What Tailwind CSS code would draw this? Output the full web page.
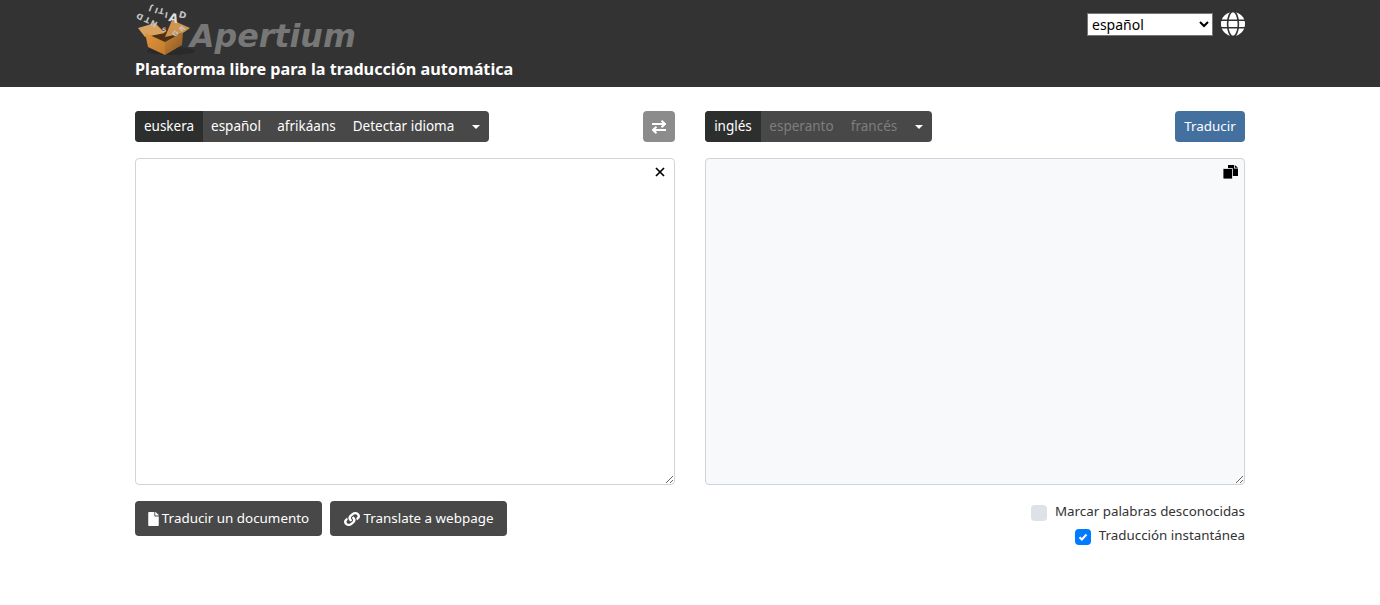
<!DOCTYPE html>
<html lang="es">
<head>
  <meta charset="UTF-8">
  <title>Apertium</title>
  <script src="https://cdn.jsdelivr.net/npm/@tailwindcss/browser@4"></script>
</head>
<body class="bg-white font-['Noto_Sans',sans-serif] h-[605px] overflow-hidden">
  <!-- header -->
  <header class="bg-[#333333] h-[87px]">
    <div class="w-[1110px] mx-auto flex justify-between">
      <div class="w-[400px]">
        <div class="flex items-start h-[58px]">
          <svg width="64" height="58" viewBox="0 0 64 58" class="shrink-0 -mr-[9px]">
            <defs>
              <linearGradient id="boxL" x1="0" y1="0" x2="1" y2="1"><stop offset="0" stop-color="#e0953f"/><stop offset="1" stop-color="#c27a2c"/></linearGradient>
              <linearGradient id="boxR" x1="0" y1="0" x2="1" y2="1"><stop offset="0" stop-color="#c98436"/><stop offset="1" stop-color="#8a5620"/></linearGradient>
            </defs>
            <ellipse cx="36" cy="51" rx="24" ry="4" fill="#2a2a2a"/>
            <path d="M10 33 L30 26 L48 32 L30 42 Z" fill="#4e3014"/>
            <path d="M3 28 L20 23 L30 33 L10 37 Z" fill="#d9a25e"/>
            <path d="M30 37 L37 20 L55 28 L48 33 Z" fill="#cf9450"/>
            <path d="M10 33 L30 42 L30 55 L13 47 Z" fill="url(#boxL)"/>
            <path d="M30 42 L48 32 L47 45 L30 55 Z" fill="url(#boxR)"/>
            <g fill="#c4c4c4" font-size="8" font-family="DejaVu Sans, sans-serif" font-weight="700">
              <text x="2" y="20" transform="rotate(205 5 17)">D</text>
              <text x="9" y="23" transform="rotate(205 12 20)">T</text>
              <text x="16" y="27" transform="rotate(205 19 24)">N</text>
              <text x="11" y="11" transform="rotate(200 14 8)">J</text>
              <text x="17" y="13" transform="rotate(200 20 10)">I</text>
              <text x="23" y="14" transform="rotate(195 26 11)">T</text>
              <text x="29" y="16" transform="rotate(190 31 14)">I</text>
              <text x="34" y="22" font-size="12" transform="rotate(15 38 18)" fill="#e0e0e0">A</text>
              <text x="44" y="18" font-size="9" transform="rotate(15 47 15)">D</text>
              <text x="27" y="32" font-size="6">S</text>
              <text x="37" y="36" font-size="7" transform="rotate(-40 40 33)">G</text>
              <text x="44" y="31" font-size="7" transform="rotate(-40 47 28)">R</text>
            </g>
          </svg>
          <span class="mt-[13px] font-['DejaVu_Sans',sans-serif] font-bold italic text-[31.7px] leading-[46px] text-[#777777]">Apertium</span>
        </div>
        <p class="font-bold text-[16.2px] leading-[22px] text-white">Plataforma libre para la traducción automática</p>
      </div>
      <div class="flex items-start gap-2 pt-3">
        <select class="mt-px w-[126px] h-[23px] bg-white text-black text-[14px] border border-[#767676]">
          <option>español</option>
        </select>
        <svg width="24" height="24" viewBox="0 0 24 24" fill="none" class="shrink-0">
          <circle cx="12" cy="12" r="12" fill="#fff"/>
          <g stroke="#333" stroke-width="1.6">
            <path d="M0 8.2h24M0 15.8h24"/>
            <ellipse cx="12" cy="12" rx="5.4" ry="12.5"/>
          </g>
        </svg>
      </div>
    </div>
  </header>

  <main class="w-[1110px] mx-auto pt-6 grid grid-cols-2 gap-x-[30px]">
    <!-- source column -->
    <div>
      <div class="flex justify-between h-[31px]">
        <div class="flex bg-[#484848] rounded text-white text-[13.5px] leading-[30px] text-center">
          <span class="w-[68px] bg-[#2d2f2f] rounded-l">euskera</span>
          <span class="w-[66px]">español</span>
          <span class="w-[75px]">afrikáans</span>
          <span class="w-[119px]">Detectar idioma</span>
          <span class="w-[26px] flex items-center justify-center"><span class="border-x-[4px] border-x-transparent border-t-[4px] border-t-white"></span></span>
        </div>
        <button class="w-8 h-[31px] bg-[#8c8c8c] rounded flex items-center justify-center">
          <svg width="14" height="14" viewBox="0 0 14 14" fill="none" stroke="#fff" stroke-width="2">
            <path d="M0 4h13M9.500 0.800 13 4 9.500 7.200M14 10H1M4.500 6.800 1 10l3.500 3.200"/>
          </svg>
        </button>
      </div>
      <div class="relative mt-4 h-[327px]">
        <textarea class="block w-full h-full bg-white border border-[#ced4da] rounded p-2"></textarea>
        <svg width="10" height="10" viewBox="0 0 10 10" class="absolute right-[10px] top-[9px]" stroke="#000" stroke-width="1.700" fill="none"><path d="M1 1l8 8M9 1l-8 8"/></svg>
      </div>
      <div class="flex gap-2 mt-4">
        <button class="h-[35px] w-[187px] bg-[#484848] rounded text-white text-[13.4px] flex items-center justify-center gap-[3px]">
          <svg width="11" height="14" viewBox="0 0 384 512" fill="#fff"><path d="M224 136V0H24C10.700 0 0 10.700 0 24v464c0 13.300 10.700 24 24 24h336c13.300 0 24-10.700 24-24V160H248c-13.200 0-24-10.800-24-24zm160-14.100v6.100H256V0h6.100c6.400 0 12.500 2.500 17 7l97.900 98c4.500 4.500 7 10.600 7 16.900z"/></svg>
          Traducir un documento
        </button>
        <button class="h-[35px] w-[177px] bg-[#484848] rounded text-white text-[13.4px] flex items-center justify-center gap-[4px]">
          <svg width="16" height="14" viewBox="0 0 512 512" fill="#fff" preserveAspectRatio="none"><path d="M326.612 185.391c59.747 59.809 58.927 155.698.36 214.59-.11.12-.24.25-.36.37l-67.2 67.2c-59.27 59.27-155.699 59.262-214.96 0-59.27-59.26-59.27-155.7 0-214.96l37.106-37.106c9.84-9.84 26.786-3.3 27.294 10.606.648 17.722 3.826 35.527 9.69 52.721 1.986 5.822.567 12.262-3.783 16.612l-13.087 13.087c-28.026 28.026-28.905 73.66-1.155 101.96 28.024 28.579 74.086 28.749 102.325.51l67.2-67.19c28.191-28.191 28.073-73.757 0-101.83-3.701-3.694-7.429-6.564-10.341-8.569a16.037 16.037 0 0 1-6.947-12.606c-.396-10.567 3.348-21.456 11.698-29.806l21.054-21.055c5.521-5.521 14.182-6.199 20.584-1.731a152.482 152.482 0 0 1 20.522 17.197zM467.547 44.449c-59.261-59.262-155.69-59.27-214.96 0l-67.2 67.2c-.12.12-.25.25-.36.37-58.566 58.892-59.387 154.781.36 214.59a152.454 152.454 0 0 0 20.521 17.196c6.402 4.468 15.064 3.789 20.584-1.731l21.054-21.055c8.35-8.35 12.094-19.239 11.698-29.806a16.037 16.037 0 0 0-6.947-12.606c-2.912-2.005-6.64-4.875-10.341-8.569-28.073-28.073-28.191-73.639 0-101.83l67.2-67.19c28.239-28.239 74.3-28.069 102.325.51 27.75 28.3 26.872 73.934-1.155 101.96l-13.087 13.087c-4.35 4.35-5.769 10.79-3.783 16.612 5.864 17.194 9.042 34.999 9.69 52.721.509 13.906 17.454 20.446 27.294 10.606l37.106-37.106c59.271-59.259 59.271-155.699.001-214.959z"/></svg>
          Translate a webpage
        </button>
      </div>
    </div>

    <!-- target column -->
    <div>
      <div class="flex justify-between h-[31px]">
        <div class="flex bg-[#484848] rounded text-[13.5px] leading-[30px] text-center">
          <span class="w-[56px] bg-[#2d2f2f] rounded-l text-white">inglés</span>
          <span class="w-[81px] text-[#7e7e7e]">esperanto</span>
          <span class="w-[64px] text-[#7e7e7e]">francés</span>
          <span class="w-[26px] flex items-center justify-center"><span class="border-x-[4px] border-x-transparent border-t-[4px] border-t-white"></span></span>
        </div>
        <button class="w-[70px] h-[31px] bg-[#44709f] rounded text-white text-[13.4px] leading-[30px] pb-px">Traducir</button>
      </div>
      <div class="relative mt-4 h-[327px]">
        <textarea readonly class="block w-full h-full bg-[#f8f9fa] border border-[#ced4da] rounded p-2"></textarea>
        <svg width="15" height="14" viewBox="0 0 15 14" class="absolute right-[7px] top-[7px]">
          <path d="M5 0h6v3.500h4V11H5z" fill="#000"/>
          <path d="M11.800 0 15 2.800h-3.200z" fill="#000"/>
          <path d="M1 3.500h8.500V13a1 1 0 0 1-1 1H1a1 1 0 0 1-1-1V4.500a1 1 0 0 1 1-1z" fill="#000" stroke="#f8f9fa" stroke-width="0.800"/>
        </svg>
      </div>
      <div class="mt-[14px] flex flex-col items-end text-[13.35px] leading-[24px] text-[#333]">
        <label class="flex items-center gap-2">
          <span class="w-4 h-4 mt-[3px] rounded bg-[#dee2e6]"></span>
          Marcar palabras desconocidas
        </label>
        <label class="flex items-center gap-2">
          <span class="w-4 h-4 mt-[3px] rounded bg-[#007bff] flex items-center justify-center">
            <svg width="10" height="10" viewBox="0 0 10 10" fill="none" stroke="#fff" stroke-width="2"><path d="M1.500 5.200l2.400 2.300 4.600-5"/></svg>
          </span>
          Traducción instantánea
        </label>
      </div>
    </div>
  </main>
</body>
</html>
